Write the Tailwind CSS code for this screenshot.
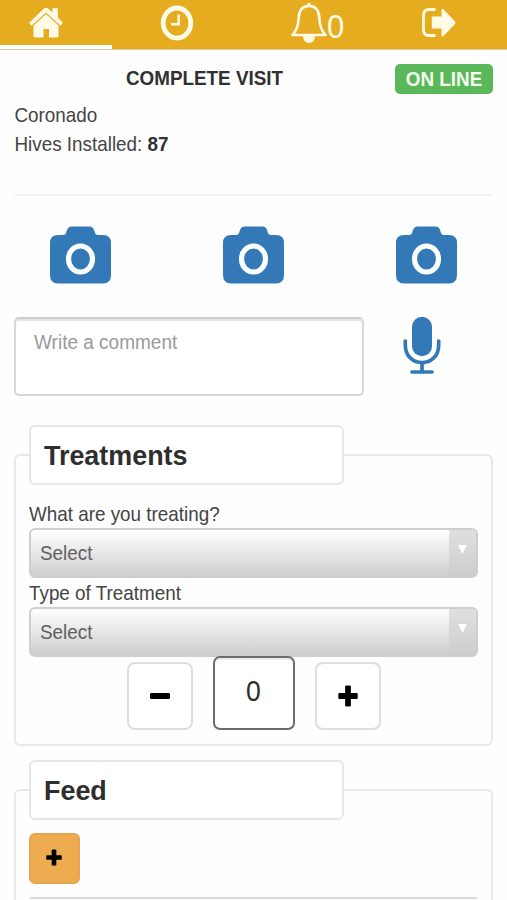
<!DOCTYPE html>
<html lang="en">
<head>
<meta charset="utf-8">
<title>Complete Visit</title>
<script src="https://cdn.jsdelivr.net/npm/@tailwindcss/browser@4"></script>
</head>
<body class="h-[900px] w-[507px] overflow-hidden bg-[#fefefe] font-['Liberation_Sans',Arial,sans-serif] text-[18.85px] leading-[29px] text-[#444]">
<svg class="hidden">
  <symbol id="camera" viewBox="0 0 61 58" preserveAspectRatio="none">
    <path fill="#3379b7" d="M8 9H13Q15.500 9 16 7L17 4Q18.300 .500 21.500 .500H39.500Q43 .500 44 4L45 7Q45.500 9 48 9H53Q61 9 61 17V49Q61 57.500 53 57.500H8Q0 57.500 0 49V17Q0 9 8 9Z"/>
    <ellipse cx="30.500" cy="33" rx="12" ry="13" fill="none" stroke="#fbffff" stroke-width="5.200"/>
  </symbol>
  <symbol id="plus" viewBox="0 0 20 22" preserveAspectRatio="none">
    <path fill="#000" d="M8.300 0.500H11.700Q12.900 .500 12.900 1.700V8H18.500Q19.700 8 19.700 9.200V12.800Q19.700 14 18.500 14H12.900V20.300Q12.900 21.500 11.700 21.500H8.300Q7.100 21.500 7.100 20.300V14H1.500Q.300 14 .300 12.800V9.200Q.300 8 1.500 8H7.100V1.700Q7.100 .500 8.300 .500Z"/>
  </symbol>
</svg>

<nav class="grid h-[50px] grid-cols-[112px_130px_151px_90px] border-b border-[#dcc9a0] bg-[#e6ac1f] text-[#fffbe6]">
  <a class="border-b-[4px] border-white pl-[29px] pt-[7px]">
    <svg class="h-[31px] w-[34px]" viewBox="0 0 34 31"><path fill="currentColor" d="M15 1.500Q17 0 19 1.500L23.500 5.500V1.200H28.800V10.500L33.800 15.800L31.600 18.800L17 5.600L2.400 18.800L.200 15.800Z"/><path fill="currentColor" d="M17 7L29.500 18.500V28.800Q29.500 30.500 27.800 30.500H20V22H14.500V30.500H6.200Q4.500 30.500 4.500 28.800V18.500Z"/></svg>
  </a>
  <a class="pl-[48px] pt-[5px]">
    <svg class="h-[36px] w-[34px]" viewBox="0 0 34 36"><ellipse cx="17" cy="18" rx="13.800" ry="15" fill="none" stroke="currentColor" stroke-width="4.800"/><path d="M18.700 9.500V19.300H11" fill="none" stroke="currentColor" stroke-width="2.500"/></svg>
  </a>
  <a class="flex pl-[49px] pt-[2px]">
    <svg class="h-[42px] w-[36px] shrink-0" viewBox="0 0 36 42"><path fill="none" stroke="currentColor" stroke-width="2.600" stroke-linejoin="round" d="M18 4C10.500 4 8 9 7.700 16C7.300 25 5.500 29 1.500 33H34.500C30.500 29 28.700 25 28.300 16C28 9 25.500 4 18 4Z"/><path fill="currentColor" d="M16.300 1.500Q18 -.200 19.700 1.500V5H16.300ZM12 34H24Q23.500 41 18 41Q12.500 41 12 34Z"/></svg>
    <span class="mt-[10px] origin-center scale-y-[1.1] text-[31px]">0</span>
  </a>
  <a class="pl-[28px] pt-[7px]">
    <svg class="h-[31px] w-[36px]" viewBox="0 0 36 31"><path fill="none" stroke="currentColor" stroke-width="2.800" d="M14.500 2.500H8Q2.500 2.500 2.500 8.500V22.500Q2.500 28.500 8 28.500H14.500"/><path fill="currentColor" d="M12 9.500H20.500V3Q20.500 1 22.200 2L34 14.500Q35 15.700 34 17L22.200 29.300Q20.500 30.300 20.500 28.300V21.500H12Q10.800 21.500 10.800 20.300V10.700Q10.800 9.500 12 9.500Z"/></svg>
  </a>
</nav>

<main class="pl-[14px] pr-[14px] pt-[14px]">
  <header class="flex h-[30px] items-center">
    <h1 class="flex-1 scale-y-[1.08] pb-[2px] text-center font-bold text-[#303030]">COMPLETE VISIT</h1>
    <span class="flex h-[30px] w-[98px] items-center justify-center rounded-[5px] bg-[#5ab75a] pb-[2px] font-bold text-[#f4fff0]"><span class="scale-y-[1.08]">ON LINE</span></span>
  </header>
  <section class="h-[102px] border-b-2 border-[#f3f3f3] pl-[0.5px] pt-[6px]">
    <p class="origin-center scale-y-[1.08]">Coronado</p>
    <p class="origin-center scale-y-[1.08]">Hives Installed: <b class="text-[#303030]">87</b></p>
  </section>

  <section class="-mx-[7px] grid grid-cols-[146px_200px_146px] justify-items-center pt-[30px]">
    <svg class="h-[58px] w-[61px]"><use href="#camera"/></svg>
    <svg class="h-[58px] w-[61px]"><use href="#camera"/></svg>
    <svg class="h-[58px] w-[61px]"><use href="#camera"/></svg>
  </section>

  <section class="mt-[32px] flex">
    <div class="mt-[1px] h-[79px] w-[350px] rounded-[5px] border-2 border-[#d8d8d8] border-t-[#cecece] bg-white pl-[18px] pt-[8px] text-[19px] text-[#9a9a9a] shadow-[inset_0_2px_1px_#e4e4e4]"><p class="scale-y-[1.08]">Write a comment</p></div>
    <svg class="ml-[39px] h-[59px] w-[38px]" viewBox="0 0 38 59"><rect x="9" y=".700" width="20" height="39.500" rx="10" fill="#3379b7"/><path fill="none" stroke="#3379b7" stroke-width="3.700" stroke-linecap="round" d="M2.300 25V29C2.300 52.500 35.700 52.500 35.700 29V25M9 56H29"/><path stroke="#3379b7" stroke-width="3.700" d="M19 46V56"/></svg>
  </section>

  <section class="mt-[58px] h-[292px] rounded-[6px] border-2 border-[#e8e8e8] px-[13px]">
    <div class="relative -mt-[31px] flex h-[60px] w-[315px] items-center rounded-[6px] border-2 border-[#e6e6e6] bg-white pl-[13px]"><h2 class="scale-y-[1.06] text-[26.900px] font-bold text-[#2e2e2e]">Treatments</h2></div>
    <p class="mt-[14px] scale-y-[1.08]">What are you treating?</p>
    <div class="flex h-[50px] overflow-hidden rounded-[6px] border-2 border-[#cecece] bg-linear-to-b from-white to-[#cecece] text-[#606060]">
      <span class="flex flex-1 items-center pb-[2px] pl-[9px]"><span class="scale-y-[1.08]">Select</span></span>
      <span class="flex w-[27px] justify-center bg-linear-to-b from-[#dfdfdf] to-[#cecece] pt-[15px]"><svg class="h-[9px] w-[9px]" viewBox="0 0 9 9"><path d="M0 0H9L4.500 9Z" fill="#fff"/></svg></span>
    </div>
    <p class="scale-y-[1.08]">Type of Treatment</p>
    <div class="flex h-[50px] overflow-hidden rounded-[6px] border-2 border-[#cecece] bg-linear-to-b from-white to-[#cecece] text-[#606060]">
      <span class="flex flex-1 items-center pb-[2px] pl-[9px]"><span class="scale-y-[1.08]">Select</span></span>
      <span class="flex w-[27px] justify-center bg-linear-to-b from-[#dfdfdf] to-[#cecece] pt-[15px]"><svg class="h-[9px] w-[9px]" viewBox="0 0 9 9"><path d="M0 0H9L4.500 9Z" fill="#fff"/></svg></span>
    </div>
    <div class="relative -mt-[1px] flex items-end pl-[98px]">
      <button class="flex h-[68px] w-[66px] items-center justify-center rounded-[8px] border-2 border-[#dddddd] bg-white"><svg class="h-[6px] w-[20px]" viewBox="0 0 20 6"><rect width="20" height="6" rx="1.300"/></svg></button>
      <div class="ml-[20px] flex h-[74px] w-[82px] items-center justify-center rounded-[7px] border-2 border-[#6c6c6c] bg-white pb-[3px] pr-[1px] text-[26.600px] text-[#2e2e2e] shadow-[inset_0_2px_1px_#ececec]"><span class="scale-y-[1.08]">0</span></div>
      <button class="ml-[20px] flex h-[68px] w-[66px] items-center justify-center rounded-[8px] border-2 border-[#dddddd] bg-white"><svg class="h-[22px] w-[20px]"><use href="#plus"/></svg></button>
    </div>
  </section>

  <section class="mt-[43px] h-[111px] overflow-visible rounded-t-[6px] border-2 border-b-0 border-[#e8e8e8] px-[13px]">
    <div class="relative -mt-[31px] flex h-[60px] w-[315px] items-center rounded-[6px] border-2 border-[#e6e6e6] bg-white pl-[13px]"><h2 class="scale-y-[1.06] text-[26.900px] font-bold text-[#2e2e2e]">Feed</h2></div>
    <button class="mt-[13px] flex h-[51px] w-[51px] items-center justify-center rounded-[6px] border-2 border-[#e6a550] bg-[#edac50] pb-[2px] pr-[1px]"><svg class="h-[17px] w-[16px]"><use href="#plus"/></svg></button>
    <div class="mt-[13px] h-[2px] rounded-t-[2px] bg-[#dadada]"></div>
  </section>
</main>
</body>
</html>
